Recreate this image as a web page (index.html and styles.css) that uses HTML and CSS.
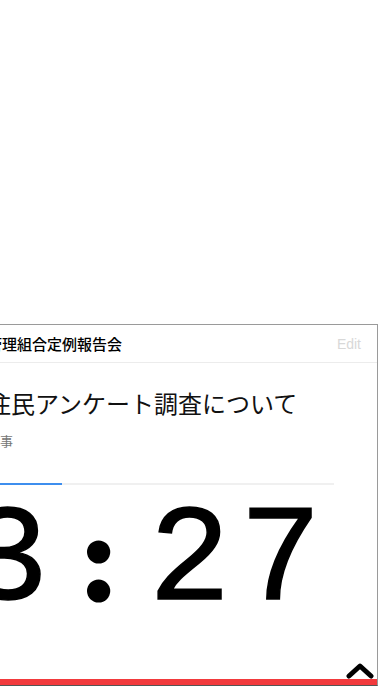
FILE: index.html
```html
<!DOCTYPE html>
<html lang="ja">
<head>
<meta charset="utf-8">
<link rel="stylesheet" href="styles.css">
</head>
<body>
<div class="stage">
  <div class="card">
    <div class="card-header">
      <span class="meeting">管理組合定例報告会</span>
      <span class="edit">Edit</span>
    </div>
    <div class="card-body">
      <div class="title">住民アンケート調査について</div>
      <div class="speaker">理事</div>
      <div class="progress"><div class="progress-fill" style="width: 75px"></div></div>
      <div class="timer"><span class="digit">3</span><span class="digit colon">:</span><span class="digit">2</span><span class="digit">7</span></div>
    </div>
    <div class="card-footer">
      <svg class="chevron" width="28" height="18" viewBox="0 0 28 18"><path d="M3 15 L14 5 L25 15" fill="none" stroke="#000" stroke-width="5" stroke-linecap="round" stroke-linejoin="round"/></svg>
    </div>
    <div class="red-bar"></div>
  </div>
</div>
</body>
</html>
```
FILE: styles.css
```css
html, body {
  margin: 0;
  padding: 0;
  background: #fff;
}
body {
  width: 392px;
  height: 696px;
  overflow: hidden;
  font-family: "Noto Sans CJK JP", "Noto Sans", sans-serif;
  color: #000;
}
.stage {
  display: flex;
  padding-top: 324px;
  overflow: hidden;
}
.card {
  flex: none;
  width: 406px;
  margin-left: -30px;
  height: 360px;
  border: 1px solid #9a9a9a;
  border-bottom: 1px solid #555;
  display: flex;
  flex-direction: column;
  box-sizing: content-box;
}
.card-header {
  height: 37px;
  padding: 0 16px;
  display: flex;
  align-items: center;
  justify-content: space-between;
  border-bottom: 1px solid #ececec;
}
.meeting {
  font-size: 15px;
  font-weight: 500;
}
.edit {
  font-family: "Liberation Sans", Arial, sans-serif;
  font-size: 14px;
  color: #d8d8d8;
}
.card-body {
  flex: 1;
  padding: 0 16px;
  display: flex;
  flex-direction: column;
}
.title {
  font-size: 24px;
  line-height: 34px;
  margin-top: 23px;
  color: #111;
}
.speaker {
  font-size: 13px;
  line-height: 18px;
  margin-top: 12px;
  color: #777;
}
.progress {
  margin-top: 33px;
  width: 347px;
  height: 2px;
  background: #f0f0f0;
}
.progress-fill {
  height: 2px;
  background: #3d8eee;
}
.timer {
  display: flex;
  align-items: baseline;
  font-family: "Liberation Mono", "Courier New", monospace;
  font-size: 137px;
  line-height: 100px;
  height: 100px;
  margin-top: 21px;
  margin-left: -25px;
  white-space: nowrap;
  -webkit-text-stroke: 1.5px #000;
}
.digit {
  flex: none;
  width: 91px;
  text-align: center;
}
.colon {
  font-family: "Lato", "Noto Sans", sans-serif;
  font-weight: 900;
  font-size: 112px;
  -webkit-text-stroke: 5px #000;
}
.card-footer {
  margin-top: auto;
  display: flex;
  justify-content: flex-end;
  padding-right: 3px;
}
.chevron {
  display: block;
}
.red-bar {
  height: 6px;
  background: #f23a3d;
}
```
